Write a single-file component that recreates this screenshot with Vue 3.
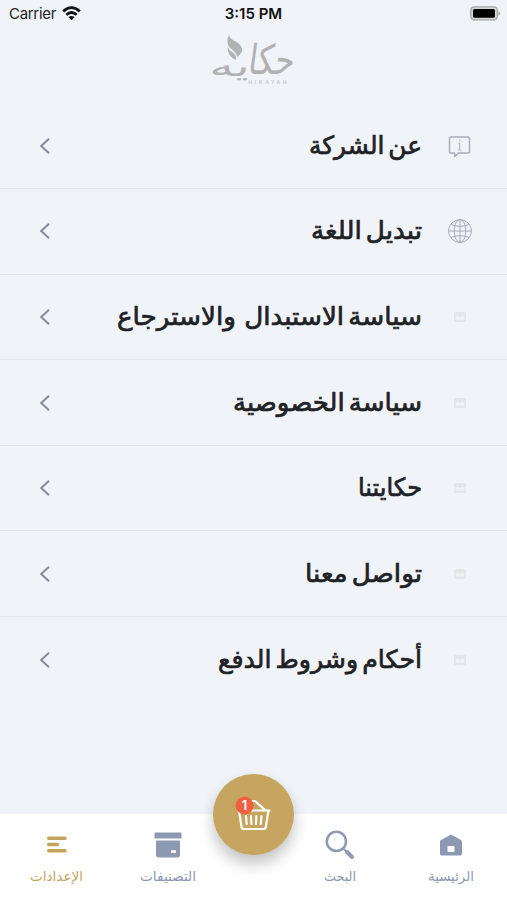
<script setup>
const rows = [
  { label: 'عن الشركة', width: 113, icon: 'info' },
  { label: 'تبديل اللغة', width: 111, icon: 'globe' },
  { label: 'سياسة الاستبدال \u00a0والاسترجاع', width: 305, icon: 'image' },
  { label: 'سياسة الخصوصية', width: 189, icon: 'image' },
  { label: 'حكايتنا', width: 64, icon: 'image' },
  { label: 'تواصل معنا', width: 117, icon: 'image' },
  { label: 'أحكام وشروط الدفع', width: 204, icon: 'image' },
]
const tabs = [
  { label: 'الرئيسية', width: 46, icon: 'home' },
  { label: 'البحث', width: 32, icon: 'search' },
  { label: '', width: 0, icon: '' },
  { label: 'التصنيفات', width: 56, icon: 'box' },
  { label: 'الإعدادات', width: 53, icon: 'menu', active: true },
]
</script>

<template>
  <div class="screen" dir="rtl">
    <header class="status" dir="ltr">
      <div class="carrier">
        <span>Carrier</span>
        <svg width="19" height="15" viewBox="0 0 19 15">
          <g fill="none" stroke="#111" stroke-width="2.8">
            <path d="M1.2 5.4Q9.5-2.1 17.8 5.4" />
            <path d="M4.3 8.8Q9.5 4.2 14.7 8.8" />
          </g>
          <path d="M6.4 11.1Q9.5 8.7 12.6 11.1L9.5 14.3Z" fill="#111" />
        </svg>
      </div>
      <span class="clock">3:15 PM</span>
      <svg class="battery" width="31" height="15" viewBox="0 0 31 15">
        <rect x=".8" y=".8" width="26.5" height="13" rx="3.5" fill="#d5d7d9" stroke="#a4a6a8" stroke-width="1.3" />
        <rect x="3" y="3" width="22" height="8.7" rx="1.5" fill="#000" />
        <path d="M28.5 5Q32 7.3 28.5 9.7Z" fill="#a4a6a8" />
      </svg>
    </header>

    <div class="brand">
      <svg width="90" height="62" viewBox="0 0 90 62" direction="rtl">
        <g fill="#b1b2b2">
          <path d="M20 3Q21 7 27 9.5Q34 14 33 19.5Q31 23 28 25Q27 20 23 17.5Q18 14 18.5 8.5Q18.5 5.5 20 3Z" />
          <path d="M18.5 14Q20 18.5 24 20.5Q27.5 23 27 28Q18 24 18.5 14Z" />
          <text class="mark" x="86" y="42" textLength="46" lengthAdjust="spacingAndGlyphs" transform="skewX(-8) translate(4 0)">حكا</text>
          <text class="mark small" x="41" y="44" textLength="40" lengthAdjust="spacingAndGlyphs" transform="skewX(-8) translate(5 0)">يه</text>
        </g>
        <text class="latin" x="39.5" y="51.5" direction="ltr" textLength="38">HIKAYAH</text>
      </svg>
    </div>

    <main class="list">
      <div v-for="row in rows" :key="row.label" class="row">
        <span class="row-icon">
          <svg v-if="row.icon === 'info'" width="24" height="26" viewBox="0 0 24 26" fill="none" stroke="#a9acba" stroke-width="1.5">
            <path d="M3 4H20Q21.5 4 21.5 5.5V18.5Q21.5 20 20 20H10.5L6.5 23.4V20H3Q1.5 20 1.5 18.5V5.5Q1.5 4 3 4Z" stroke-linejoin="round" />
            <path d="M10.4 10.2H11.7V17M10.2 17H13.2M11 7.2H12.4" stroke-width="1" />
          </svg>
          <svg v-else-if="row.icon === 'globe'" width="26" height="26" viewBox="0 0 26 26" fill="none" stroke="#a7aab8" stroke-width="1">
            <circle cx="13" cy="13" r="11.4" />
            <ellipse cx="13" cy="13" rx="5.8" ry="11.4" />
            <path d="M13 1.6V24.4M1.6 13H24.4M4 6.5Q13 10.2 22 6.5M4 19.5Q13 15.8 22 19.5" />
          </svg>
          <svg v-else width="14" height="12" viewBox="0 0 14 12">
            <rect x="1" y="1" width="12" height="10" rx="1.5" fill="#e3e6e9" />
            <path d="M2.7 6L4.5 4.3L7 6.2L9 4.3L11.3 6V8.7H2.7Z" fill="#f1f3f5" />
          </svg>
        </span>
        <svg class="label" :width="row.width" height="40" direction="rtl">
          <text :x="row.width" y="27.5" :textLength="row.width" lengthAdjust="spacingAndGlyphs">{{ row.label }}</text>
        </svg>
        <svg class="chevron" width="12" height="18" viewBox="0 0 12 18">
          <path d="M10 1.7L2.2 9L10 16.3" fill="none" stroke="#858b9d" stroke-width="2" />
        </svg>
      </div>
    </main>

    <nav class="tabs">
      <div v-for="tab in tabs" :key="tab.icon" class="tab" :class="{ active: tab.active }">
        <svg v-if="tab.icon === 'home'" width="32" height="32" viewBox="0 0 32 32">
          <path d="M16 5.5L26 11Q27 11.6 27 13V24.5Q27 26.5 25 26.5H7Q5 26.5 5 24.5V13Q5 11.6 6 11Z" fill="currentColor" />
          <rect x="12.5" y="17" width="7" height="6" rx=".7" fill="#fff" />
        </svg>
        <svg v-else-if="tab.icon === 'search'" width="32" height="32" viewBox="0 0 32 32" fill="none" stroke="currentColor">
          <circle cx="12.4" cy="12.4" r="9.6" stroke-width="2.5" />
          <path d="M19.5 19.5L23 23" stroke-width="2" />
          <path d="M23 23L28 28" stroke-width="4" stroke-linecap="round" />
        </svg>
        <svg v-else-if="tab.icon === 'box'" width="32" height="32" viewBox="0 0 32 32">
          <rect x="2.5" y="3.5" width="27" height="6" rx="1.2" fill="currentColor" />
          <path d="M4 11.5H28V25.5Q28 28.5 25 28.5H7Q4 28.5 4 25.5Z" fill="currentColor" />
          <rect x="19" y="21.3" width="5" height="2.6" fill="#fff" />
        </svg>
        <svg v-else-if="tab.icon === 'menu'" width="32" height="32" viewBox="0 0 32 32" fill="none" stroke="currentColor" stroke-width="3.5" stroke-linecap="round">
          <path d="M7.7 9.2H24M7.7 15.5H16.5M7.7 21.8H24" />
        </svg>
        <svg v-if="tab.label" class="tab-label" :width="tab.width" height="24" direction="rtl">
          <text :x="tab.width" y="16" :textLength="tab.width" lengthAdjust="spacingAndGlyphs">{{ tab.label }}</text>
        </svg>
      </div>
      <div class="cart">
        <svg width="81" height="81" viewBox="0 0 81 81">
          <g fill="none" stroke="#fff" stroke-width="2.2" stroke-linejoin="round" stroke-linecap="round">
            <path d="M25 36.5H56.5M26 36.5L28.5 53Q28.8 55 30.8 55H50.5Q52.5 55 52.8 53L55.5 36.5M31 35.5L37 27H42L51.5 35.5" />
            <path d="M33 42L33.7 50M38 42L38.4 50M43.3 42L43 50M48.4 42L47.8 50" />
          </g>
          <circle cx="31.5" cy="31.5" r="9" fill="#ee6040" />
          <text class="count" x="31.5" y="36" text-anchor="middle">1</text>
        </svg>
      </div>
    </nav>
  </div>
</template>

<style scoped>
.screen {
  width: 507px;
  height: 900px;
  display: flex;
  flex-direction: column;
  overflow: hidden;
  background: #f0f4f9;
  font-family: "DejaVu Sans", sans-serif;
}
.status {
  height: 27px;
  display: grid;
  grid-template-columns: 1fr auto 1fr;
  align-items: center;
  padding: 0 6px 0 9px;
  box-sizing: border-box;
  font: 15px Inter, sans-serif;
  color: #222;
}
.carrier { display: flex; align-items: center; gap: 6px; letter-spacing: -0.3px; }
.carrier svg { margin-bottom: 1px; }
.clock { font-weight: 600; color: #111; padding-right: 3px; }
.battery { justify-self: end; margin-bottom: 1px; }
.brand { height: 76.5px; display: flex; justify-content: center; align-items: flex-start; padding-top: 5px; box-sizing: border-box; }
.brand svg { overflow: visible; }
.mark { font: 41px "DejaVu Sans", sans-serif; }
.mark.small { font-size: 29px; }
.latin { font: 700 5px "Liberation Sans", sans-serif; fill: #c3c5c7; }
.list { display: flex; flex-direction: column; }
.row {
  height: 85.6px;
  box-sizing: border-box;
  display: flex;
  align-items: center;
  padding: 0 34px 0 39px;
  border-bottom: 1px solid #e3e7ec;
}
.row:last-child { border-bottom: 0; }
.row-icon { width: 26px; margin-left: 25px; display: flex; justify-content: center; }
.label { overflow: visible; }
.label text { font-size: 25px; word-spacing: -4px; fill: #202124; stroke: #202124; stroke-width: 0.7px; }
.chevron { margin-right: auto; }
.tabs {
  position: relative;
  height: 86px;
  margin-top: auto;
  display: grid;
  grid-template-columns: 111.5px 111.5px 1fr 111.5px 111.5px;
  padding-left: 1px;
  background: #fff;
}
.tab {
  display: flex;
  flex-direction: column;
  align-items: center;
  padding-top: 15px;
  color: #8d99b3;
}
.active { color: #c4a35c; }
.tab-label { overflow: visible; margin-top: 4px; }
.tab-label text { font-size: 13.5px; fill: currentColor; }
.cart {
  position: absolute;
  left: 213px;
  top: -40px;
  width: 81px;
  height: 81px;
  border-radius: 50%;
  background: #c5a560;
  box-shadow: 0 9px 15px rgba(0, 0, 0, 0.24);
}
.cart svg { display: block; }
.count { font: 600 13px Inter, sans-serif; fill: #fff; }
</style>

<style>
body { margin: 0; background: #f0f4f9; }
</style>
